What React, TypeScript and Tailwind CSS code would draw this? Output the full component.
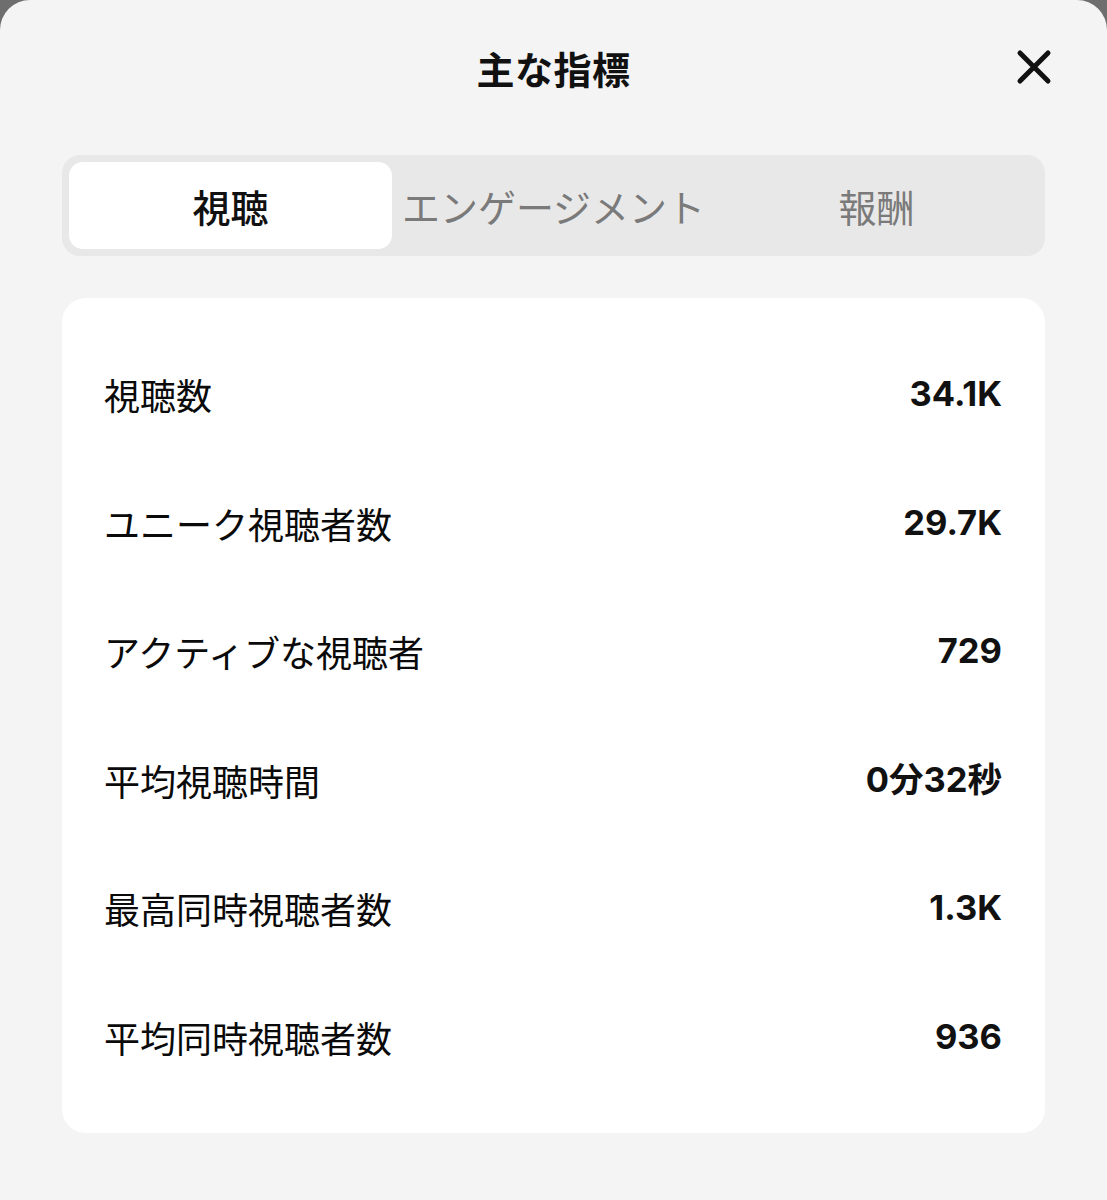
import React from "react";

const rows: [string, string][] = [
  ["視聴数", "34.1K"],
  ["ユニーク視聴者数", "29.7K"],
  ["アクティブな視聴者", "729"],
  ["平均視聴時間", "0分32秒"],
  ["最高同時視聴者数", "1.3K"],
  ["平均同時視聴者数", "936"],
];

const jp = { fontFamily: '"Noto Sans CJK JP", "Noto Sans", sans-serif' };
const num = { fontFamily: 'Inter, "Noto Sans CJK JP", sans-serif' };

export default function App() {
  return (
    <div className="w-[1107px] h-[1200px] bg-[#6e6e6e]" style={jp}>
      <div className="w-full h-full bg-[#f4f4f4] rounded-t-[30px] overflow-hidden">
        <div className="relative h-[136px] flex items-center justify-center">
          <h1 className="text-[38px] font-bold text-[#111] leading-none tracking-[0.5px]">主な指標</h1>
          <button className="absolute right-[55px] top-[49px] w-[36px] h-[36px] flex items-center justify-center">
            <svg width="36" height="36" viewBox="0 0 36 36">
              <path d="M4 4 L32 32 M32 4 L4 32" stroke="#111" strokeWidth="5" strokeLinecap="round" />
            </svg>
          </button>
        </div>
        <div className="px-[62px]">
          <div className="mt-[19px] h-[101px] bg-[#e8e8e8] rounded-[18px] p-[7px] grid grid-cols-3">
            <div className="bg-white rounded-[14px] flex items-center justify-center text-[38px] font-medium text-[#111]">視聴</div>
            <div className="flex items-center justify-center text-[38px] text-[#7a7a7a]">エンゲージメント</div>
            <div className="flex items-center justify-center text-[38px] text-[#7a7a7a]">報酬</div>
          </div>
          <div className="mt-[42px] bg-white rounded-[24px] py-[32px] pl-[42px] pr-[43px]">
            {rows.map(([label, value]) => (
              <div key={label} className="h-[128.5px] flex items-center justify-between">
                <span className="text-[36px] font-normal text-[#0a0a0a]">{label}</span>
                <span className="text-[34.5px] font-bold text-[#111]" style={num}>{value}</span>
              </div>
            ))}
          </div>
        </div>
      </div>
    </div>
  );
}
